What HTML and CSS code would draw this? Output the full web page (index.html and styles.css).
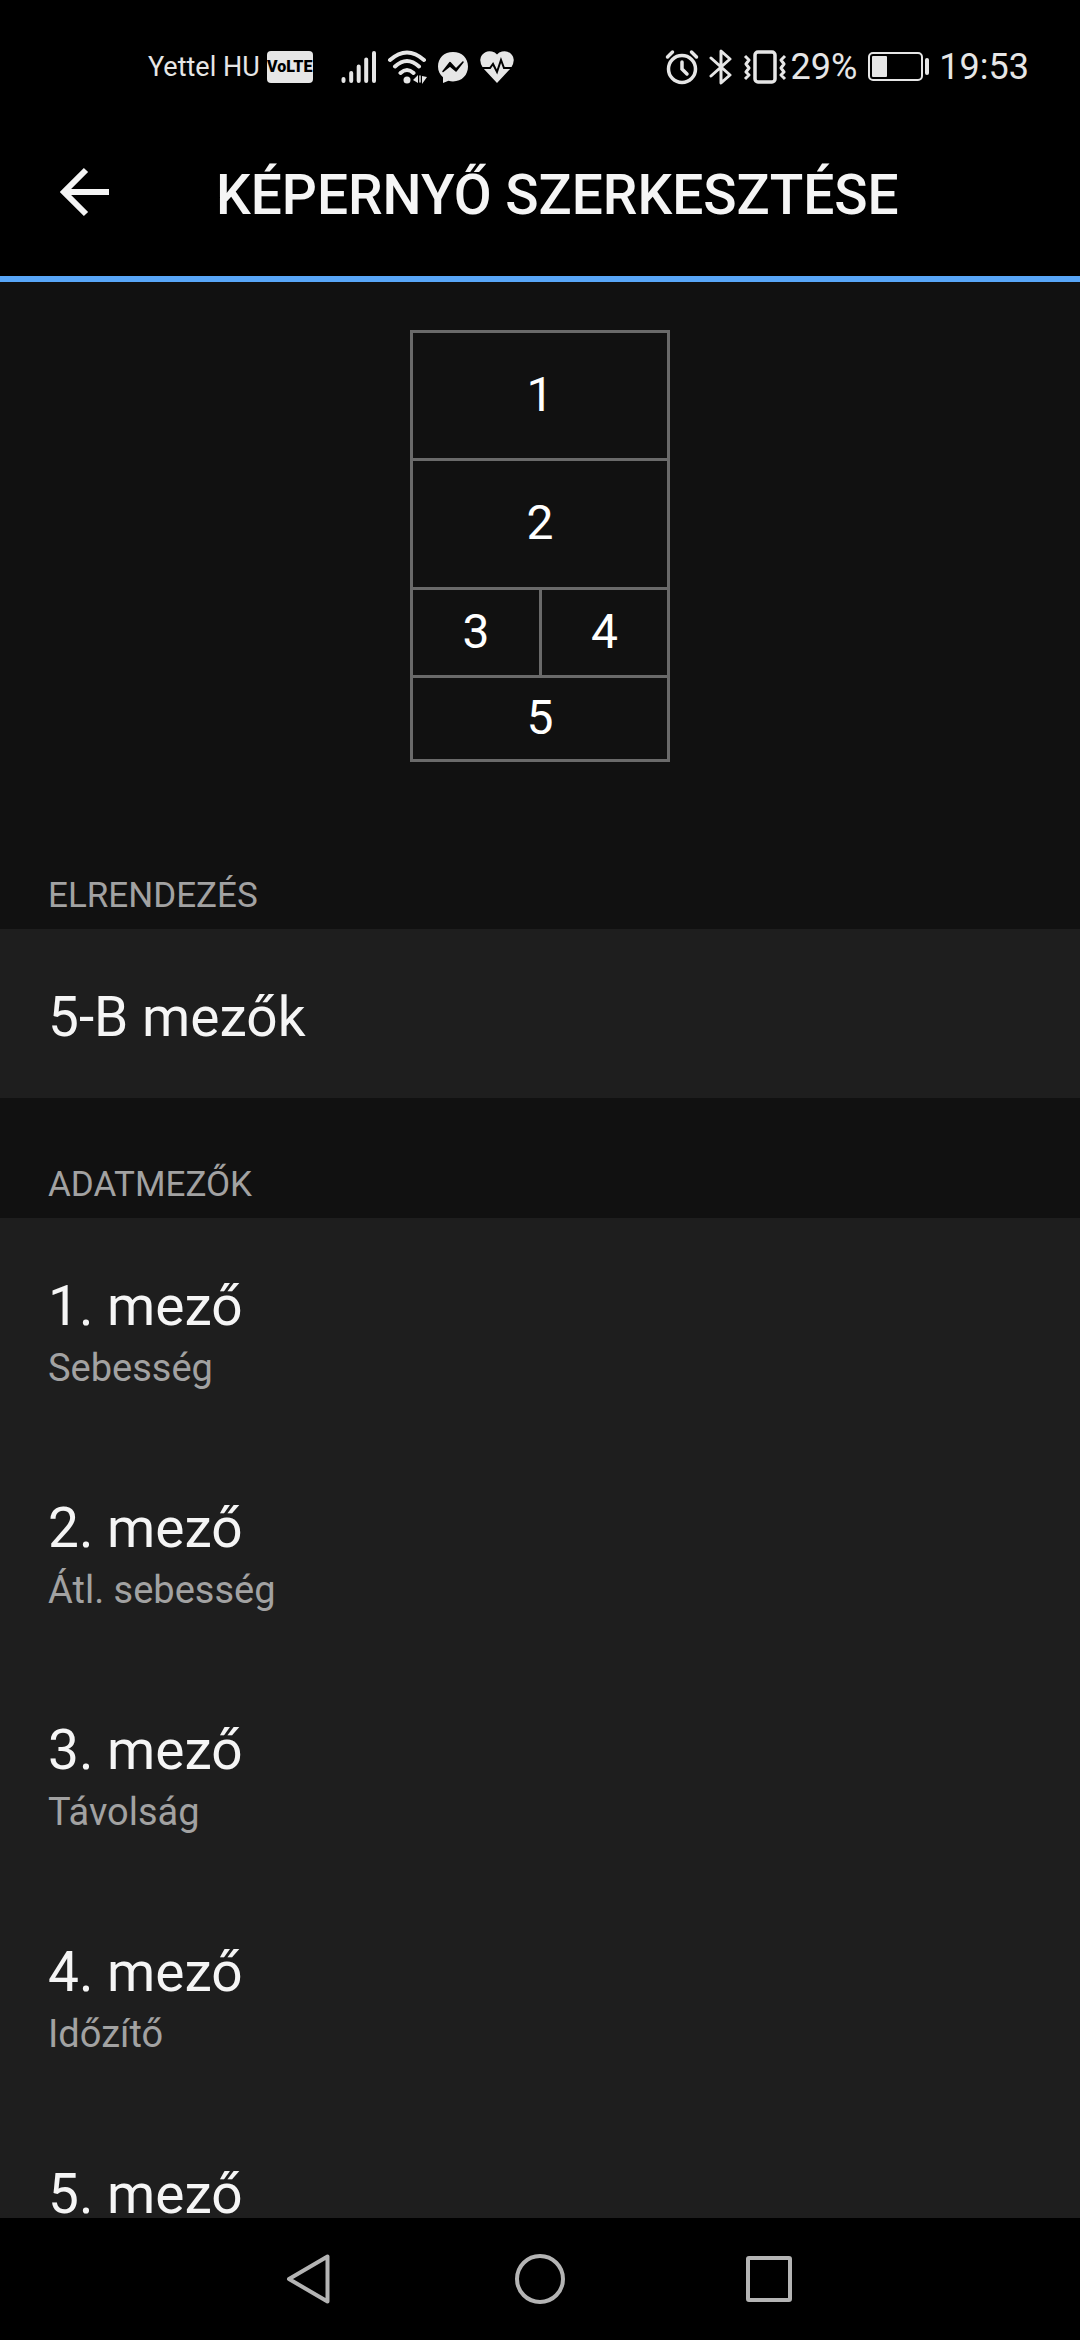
FILE: index.html
```html
<!DOCTYPE html>
<html lang="hu">
<head>
<meta charset="utf-8">
<meta name="viewport" content="width=device-width, initial-scale=1">
<title>Képernyő szerkesztése</title>
<link rel="stylesheet" href="styles.css">
</head>
<body>
<div class="status">
  <div class="status-left">
    <span class="carrier">Yettel HU</span>
    <span class="volte">VoLTE</span>
    <svg class="signal" width="36" height="34" viewBox="0 0 36 34" aria-hidden="true" stroke="currentColor" stroke-width="4" stroke-linecap="round"><path d="M2.500 29v2M10.200 23v8M17.700 16.500V31M25.200 9.500V31M33 3v28"/></svg>
    <svg width="40" height="34" viewBox="0 0 40 34" aria-hidden="true" fill="none" stroke="currentColor" stroke-width="4" stroke-linecap="round"><path d="M3 10Q20-5 37 10M8 16.500Q20 5.500 32 16.500M13.500 23Q20 17 26.500 23"/><circle cx="20" cy="30" r="3.500" fill="currentColor" stroke="none"/><path d="M26 30l5-5v8zM35 26v8l5-7z" fill="currentColor" stroke="none"/><path d="M33 26v6" stroke-width="1.500"/></svg>
    <svg class="messenger" width="32" height="34" viewBox="0 0 32 34" aria-hidden="true"><path fill="currentColor" d="M16 2C7 2 1 8 1 16.500c0 4.500 1.800 8 5 10.800V33l5.500-2.200c1.500.4 3 .6 4.500.6 9 0 15-6.500 15-14.900S25 2 16 2z"/><path d="M6 21.500l7-9 6 6.500 7-7-7 9-6-5z" fill="#000" stroke="#000" stroke-width="1.500" stroke-linejoin="round"/></svg>
    <svg width="36" height="34" viewBox="0 0 36 34" aria-hidden="true"><path fill="currentColor" d="M18 33L4 18Q-1 10 3 5t10-3.500q3 .5 5 3 2-2.500 5-3Q29 0 33 5t-1 13z"/><path d="M1 18h10l3-4 4 8 4-12 3 8h10" fill="none" stroke="#000" stroke-width="2"/></svg>
  </div>
  <div class="status-right">
    <svg width="34" height="36" viewBox="0 0 34 36" aria-hidden="true" fill="none" stroke="currentColor" stroke-width="3.500" stroke-linecap="round"><circle cx="17" cy="20" r="13.500"/><path d="M17 13v7l5 5M2.500 8l5-5M31.500 8l-5-5"/></svg>
    <svg class="bluetooth" width="24" height="36" viewBox="0 0 24 36" aria-hidden="true" fill="none" stroke="currentColor" stroke-width="3" stroke-linejoin="round" stroke-linecap="round"><path d="M2 9l19 17-9 8V2l9 8L2 27"/></svg>
    <svg width="44" height="36" viewBox="0 0 44 36" aria-hidden="true" fill="none" stroke="currentColor" stroke-width="3.500" stroke-linejoin="round"><rect x="12" y="3" width="20" height="30" rx="3"/><path d="M2 7l4 4-3 4 3 4-3 4 3 3-4 4M42 7l-4 4 3 4-3 4 3 4-3 3 4 4" stroke-width="3"/></svg>
    <span class="reading battery-level">29%</span>
    <svg class="battery" width="62" height="30" viewBox="0 0 62 30" aria-hidden="true"><rect x="2" y="1" width="53" height="27" rx="4" fill="none" stroke="currentColor" stroke-width="2"/><rect x="5" y="4" width="15" height="21" rx="1" fill="currentColor"/><rect x="58" y="6" width="4" height="17" rx="2" fill="currentColor"/></svg>
    <span class="reading">19:53</span>
  </div>
</div>

<header class="app-bar">
  <button class="back" type="button" aria-label="Vissza">
    <svg width="50" height="50" viewBox="0 0 50 50" aria-hidden="true" fill="none" stroke="currentColor" stroke-width="6"><path d="M26 3L4 25l22 22M4 25h45"/></svg>
  </button>
  <h1>KÉPERNYŐ SZERKESZTÉSE</h1>
</header>

<main>
  <div class="preview">
    <div class="grid">
      <div class="cell wide">1</div>
      <div class="cell wide">2</div>
      <div class="cell">3</div>
      <div class="cell">4</div>
      <div class="cell wide">5</div>
    </div>
  </div>

  <section>
    <h2>ELRENDEZÉS</h2>
    <button class="row single" type="button"><span class="name">5-B mezők</span></button>
  </section>

  <section>
    <h2>ADATMEZŐK</h2>
    <button class="row" type="button"><span class="name">1. mező</span><span class="value">Sebesség</span></button>
    <button class="row" type="button"><span class="name">2. mező</span><span class="value">Átl. sebesség</span></button>
    <button class="row" type="button"><span class="name">3. mező</span><span class="value">Távolság</span></button>
    <button class="row" type="button"><span class="name">4. mező</span><span class="value">Időzítő</span></button>
    <button class="row" type="button"><span class="name">5. mező</span></button>
  </section>
</main>

<nav class="system-nav">
  <button type="button" aria-label="Vissza"><svg width="52" height="52" viewBox="0 0 52 52" aria-hidden="true"><path d="M42.500 3.500v45L4 26z"/></svg></button>
  <button type="button" aria-label="Kezdőképernyő"><svg width="52" height="52" viewBox="0 0 52 52" aria-hidden="true"><circle cx="26" cy="26" r="23"/></svg></button>
  <button type="button" aria-label="Legutóbbiak"><svg width="52" height="52" viewBox="0 0 52 52" aria-hidden="true"><rect x="5" y="5" width="42" height="42" rx="1"/></svg></button>
</nav>
</body>
</html>
```
FILE: styles.css
```css
* {
  box-sizing: border-box;
}

body {
  margin: 0;
  height: 100vh;
  display: flex;
  flex-direction: column;
  background: #000;
  color: #f5f5f5;
  font-family: Roboto, "Noto Sans", sans-serif;
}

button {
  margin: 0;
  padding: 0;
  border: 0;
  background: none;
  color: inherit;
  font: inherit;
  text-align: left;
}

svg {
  display: block;
  flex: none;
}

/* Status bar */
.status {
  flex: none;
  display: flex;
  justify-content: space-between;
  height: 134px;
  padding: 0 51px 0 148px;
  color: #e6e6e6;
}

.status-left,
.status-right {
  display: flex;
  align-items: center;
}

.status-left {
  gap: 10px;
}

.carrier {
  font-size: 27px;
  line-height: 32px;
}

.volte {
  width: 46px;
  margin-left: -3px;
  border-radius: 4px;
  background: #e6e6e6;
  color: #000;
  font-size: 16px;
  font-weight: 900;
  line-height: 32px;
  text-align: center;
}

.signal {
  margin-left: 18px;
}

.status-right {
  gap: 10px;
}

.reading {
  font-size: 36px;
  line-height: 42px;
}

.battery-level {
  margin-left: -6px;
}

/* App bar */
.app-bar {
  flex: none;
  display: flex;
  align-items: center;
  gap: 106px;
  height: 148px;
  padding: 0 60px 26px;
  border-bottom: 6px solid #58a6f8;
}

h1 {
  margin: 0;
  padding-top: 6px;
  font-size: 55px;
  font-weight: 500;
  line-height: 64px;
}

/* Scrolling content */
main {
  flex: 1;
  min-height: 0;
  overflow-y: auto;
  scrollbar-width: none;
  background: #111;
}

.preview {
  display: flex;
  justify-content: center;
  padding: 48px 0 47px;
}

.grid {
  display: grid;
  grid-template-columns: 126px 125px;
  grid-template-rows: 125px 126px 85px 81px;
  gap: 3px;
  padding: 3px;
  background: #6a6a6a;
}

.cell {
  display: flex;
  align-items: center;
  justify-content: center;
  padding-bottom: 2px;
  background: #111;
  color: #fff;
  font-size: 48px;
  line-height: 56px;
}

.wide {
  grid-column: span 2;
}

h2 {
  margin: 0;
  padding: 66px 48px 12px;
  color: #a2a2a2;
  font-size: 35px;
  font-weight: 400;
  line-height: 42px;
}

.row {
  display: flex;
  flex-direction: column;
  width: 100%;
  padding: 55px 48px 43px;
  background: #1e1e1e;
}

.single {
  padding-bottom: 48px;
}

.name {
  font-size: 55px;
  line-height: 66px;
}

.value {
  color: #a2a2a2;
  font-size: 38px;
  line-height: 58px;
}

/* System navigation */
.system-nav {
  flex: none;
  display: flex;
  justify-content: center;
  gap: 177px;
  padding: 35px 0;
  color: #b4b4b4;
}

.system-nav svg {
  fill: none;
  stroke: currentColor;
  stroke-width: 4;
  stroke-linejoin: round;
}
```
